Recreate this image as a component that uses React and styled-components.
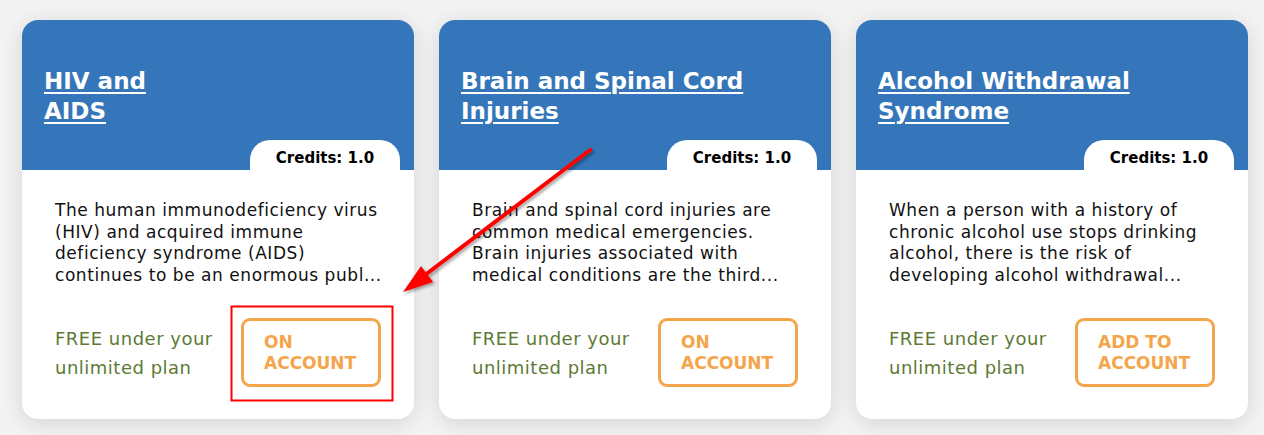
import React from 'react'
import styled, { createGlobalStyle } from 'styled-components'

const GlobalStyle = createGlobalStyle`
  body {
    margin: 0;
    background: #f3f3f3;
    font-family: "DejaVu Sans", Verdana, sans-serif;
  }
`;

const Page = styled.div`
  position: relative;
  display: grid;
  grid-template-columns: repeat(3, 392px);
  gap: 25px;
  padding: 20px 16px 16px 22px;
`;

const Card = styled.div`
  display: flex;
  flex-direction: column;
  background: #fff;
  border-radius: 16px;
  overflow: hidden;
  box-shadow: 0 4px 22px rgba(0, 0, 0, 0.13);
`;

const Header = styled.div`
  display: flex;
  flex-direction: column;
  height: 150px;
  box-sizing: border-box;
  padding: 46px 14px 0 22px;
  background: #3476b9;
`;

const Title = styled.a`
  color: #fff;
  font-size: 23px;
  font-weight: 700;
  line-height: 30px;
  text-decoration: underline;
  text-underline-offset: 3px;
  text-decoration-thickness: 2px;
  max-width: ${({ $narrow }) => ($narrow ? '120px' : '320px')};
  cursor: pointer;
`;

const Credits = styled.div`
  margin-top: auto;
  align-self: flex-end;
  width: 150px;
  height: 30px;
  display: flex;
  align-items: center;
  justify-content: center;
  padding-top: 6px;
  box-sizing: border-box;
  background: #fff;
  border-radius: 20px 20px 0 0;
  color: #000;
  font-size: 15px;
  font-weight: 700;
`;

const Body = styled.div`
  display: flex;
  flex-direction: column;
  padding: 30px 30px 32px 33px;
`;

const Description = styled.p`
  margin: 0;
  height: 87px;
  color: #111;
  font-size: 17px;
  letter-spacing: 0.55px;
  line-height: 21.7px;
`;

const Footer = styled.div`
  display: flex;
  align-items: center;
  justify-content: space-between;
  margin-top: 31px;
  padding-right: 3px;
`;

const Free = styled.span`
  color: #5c7a34;
  font-size: 18px;
  letter-spacing: 0.5px;
  line-height: 29px;
  max-width: 175px;
`;

const AccountButton = styled.button`
  width: 140px;
  height: 69px;
  box-sizing: border-box;
  padding: 0 16px 0 20px;
  text-align: left;
  background: #fff;
  border: 3px solid #f4a54b;
  border-radius: 9px;
  color: #f4a54b;
  font-family: inherit;
  font-size: 17px;
  font-weight: 700;
  line-height: 21px;
  text-transform: uppercase;
  cursor: pointer;
`;

const Overlay = styled.svg`
  position: absolute;
  left: 0;
  top: 0;
  width: 1264px;
  height: 435px;
  pointer-events: none;
  overflow: visible;
`;

const courses = [
  {
    title: 'HIV and AIDS',
    narrow: true,
    desc: 'The human immunodeficiency virus (HIV) and acquired immune deficiency syndrome (AIDS) continues to be an enormous publ...',
    action: 'On account',
  },
  {
    title: 'Brain and Spinal Cord Injuries',
    desc: 'Brain and spinal cord injuries are common medical emergencies. Brain injuries associated with medical conditions are the third...',
    action: 'On account',
  },
  {
    title: 'Alcohol Withdrawal Syndrome',
    desc: 'When a person with a history of chronic alcohol use stops drinking alcohol, there is the risk of developing alcohol withdrawal...',
    action: 'Add to account',
  },
]

const App = () => {
  return (
    <>
      <GlobalStyle />
      <Page>
        {courses.map((c) => (
          <Card key={c.title}>
            <Header>
              <Title $narrow={c.narrow}>{c.title}</Title>
              <Credits>Credits: 1.0</Credits>
            </Header>
            <Body>
              <Description>{c.desc}</Description>
              <Footer>
                <Free>FREE under your unlimited plan</Free>
                <AccountButton>{c.action}</AccountButton>
              </Footer>
            </Body>
          </Card>
        ))}
        <Overlay>
          <defs>
            <filter id="shadow" x="-20%" y="-20%" width="140%" height="140%">
              <feDropShadow dx="2" dy="2" stdDeviation="1.5" floodColor="#000" floodOpacity="0.35" />
            </filter>
          </defs>
          <rect x="231.5" y="306.5" width="161" height="94" fill="none" stroke="#ff0000" strokeWidth="2" />
          <g filter="url(#shadow)">
            <line x1="590" y1="150" x2="425" y2="275" stroke="#ff0000" strokeWidth="4" strokeLinecap="round" />
            <polygon points="403,292 433,282 421,266" fill="#ff0000" />
          </g>
        </Overlay>
      </Page>
    </>
  )
}

export default App
